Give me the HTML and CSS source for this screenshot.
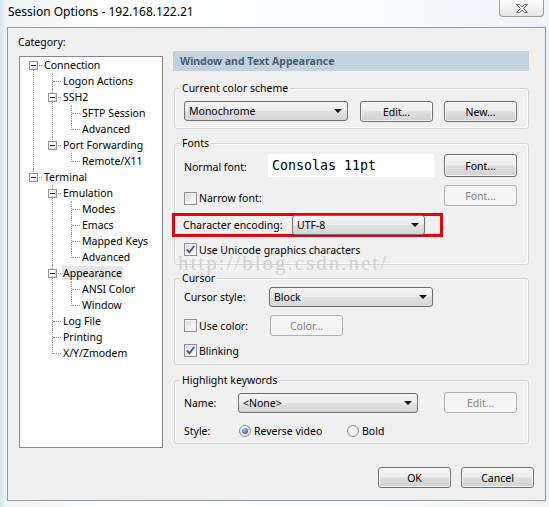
FILE: index.html
```html
<!DOCTYPE html>
<html>
<head>
<meta charset="utf-8">
<title>Session Options</title>
<link rel="stylesheet" href="styles.css">
</head>
<body>
<div class="frame">
  <div class="titlebar">
    <span class="title">Session Options - 192.168.122.21</span>
    <span class="close">
      <svg width="14" height="11" viewBox="0 0 14 11"><path d="M1.5 1.5h3l2.5 2.5 2.5-2.5h3l-4 4 4 4h-3l-2.5-2.5-2.5 2.5h-3l4-4z" fill="#fff" stroke="#6b6b6b" stroke-width="1" stroke-linejoin="round"/></svg>
    </span>
  </div>
  <div class="client">
    <div class="main">
      <div class="left">
        <div class="cat-label">Category:</div>
        <div class="treebox">
          <ul class="tree">
            <li><div class="row"><span class="box"></span><span class="lbl">Connection</span></div>
              <ul>
                <li><div class="row"><span class="lbl">Logon Actions</span></div></li>
                <li><div class="row"><span class="box"></span><span class="lbl">SSH2</span></div>
                  <ul>
                    <li><div class="row"><span class="lbl">SFTP Session</span></div></li>
                    <li><div class="row"><span class="lbl">Advanced</span></div></li>
                  </ul>
                </li>
                <li><div class="row"><span class="box"></span><span class="lbl">Port Forwarding</span></div>
                  <ul>
                    <li><div class="row"><span class="lbl">Remote/X11</span></div></li>
                  </ul>
                </li>
              </ul>
            </li>
            <li><div class="row"><span class="box"></span><span class="lbl">Terminal</span></div>
              <ul>
                <li><div class="row"><span class="box"></span><span class="lbl">Emulation</span></div>
                  <ul>
                    <li><div class="row"><span class="lbl">Modes</span></div></li>
                    <li><div class="row"><span class="lbl">Emacs</span></div></li>
                    <li><div class="row"><span class="lbl">Mapped Keys</span></div></li>
                    <li><div class="row"><span class="lbl">Advanced</span></div></li>
                  </ul>
                </li>
                <li><div class="row"><span class="box"></span><span class="lbl sel">Appearance</span></div>
                  <ul>
                    <li><div class="row"><span class="lbl">ANSI Color</span></div></li>
                    <li><div class="row"><span class="lbl">Window</span></div></li>
                  </ul>
                </li>
                <li><div class="row"><span class="lbl">Log File</span></div></li>
                <li><div class="row"><span class="lbl">Printing</span></div></li>
                <li><div class="row"><span class="lbl">X/Y/Zmodem</span></div></li>
              </ul>
            </li>
          </ul>
        </div>
      </div>

      <div class="right">
        <div class="header">Window and Text Appearance</div>

        <div class="group g-scheme">
          <div class="gtitle">Current color scheme</div>
          <div class="grow r-scheme">
            <div class="combo c-scheme"><span>Monochrome</span><i class="arrow"></i></div>
            <button type="button" class="btn b-edit">Edit...</button>
            <button type="button" class="btn b-new">New...</button>
          </div>
        </div>

        <div class="group g-fonts">
          <div class="gtitle">Fonts</div>
          <div class="grow r-normal">
            <span class="flabel">Normal font:</span>
            <span class="fontbox">Consolas 11pt</span>
            <button type="button" class="btn b-font">Font...</button>
          </div>
          <div class="grow r-narrow">
            <span class="check"><span class="cb"></span><span>Narrow font:</span></span>
            <button type="button" class="btn dis b-right" disabled>Font...</button>
          </div>
          <div class="grow r-enc">
            <div class="encbox">
              <span class="elabel">Character encoding:</span>
              <div class="combo c-enc"><span>UTF-8</span><i class="arrow"></i></div>
            </div>
          </div>
          <div class="grow r-uni">
            <span class="check"><span class="cb on"><svg width="11" height="11" viewBox="0 0 11 11"><path d="M2 5.5l2.5 2.8L9.2 2" fill="none" stroke="#3b5894" stroke-width="1.9"/></svg></span><span>Use Unicode graphics characters</span></span>
          </div>
        </div>

        <div class="group g-cursor">
          <div class="gtitle">Cursor</div>
          <div class="grow r-cstyle">
            <span class="clabel">Cursor style:</span>
            <div class="combo c-cursor"><span>Block</span><i class="arrow"></i></div>
          </div>
          <div class="grow r-ucolor">
            <span class="check w86"><span class="cb"></span><span>Use color:</span></span>
            <button type="button" class="btn dis" disabled>Color...</button>
          </div>
          <div class="grow r-blink">
            <span class="check"><span class="cb on"><svg width="11" height="11" viewBox="0 0 11 11"><path d="M2 5.5l2.5 2.8L9.2 2" fill="none" stroke="#3b5894" stroke-width="1.9"/></svg></span><span>Blinking</span></span>
          </div>
        </div>

        <div class="group g-hl">
          <div class="gtitle">Highlight keywords</div>
          <div class="grow r-name">
            <span class="hlabel">Name:</span>
            <div class="combo c-name"><span>&lt;None&gt;</span><i class="arrow"></i></div>
            <button type="button" class="btn dis b-right" disabled>Edit...</button>
          </div>
          <div class="grow r-style">
            <span class="hlabel">Style:</span>
            <span class="radio w108"><span class="rb on"></span><span>Reverse video</span></span>
            <span class="radio"><span class="rb"></span><span>Bold</span></span>
          </div>
        </div>

        <div class="watermark">http://blog.csdn.net/</div>
      </div>
    </div>

    <div class="actions">
      <button type="button" class="btn">OK</button>
      <button type="button" class="btn">Cancel</button>
    </div>
  </div>
</div>
</body>
</html>
```

FILE: styles.css
```css
* { box-sizing: border-box; }
html, body { margin: 0; padding: 0; }
button { margin: 0; }
body {
  width: 549px;
  height: 507px;
  overflow: hidden;
  font-family: "Noto Sans", "DejaVu Sans", sans-serif;
  font-size: 10.5px;
  color: #000;
}
.frame {
  width: 549px;
  height: 507px;
  background: linear-gradient(90deg, #d9e4ee 0px, #eef3f7 6px, #ffffff 120px, #f7f9fb 420px, #eef2f6 549px);
}
.titlebar {
  height: 27px;
  display: flex;
  align-items: flex-start;
}
.title {
  font-size: 12px;
  line-height: 14px;
  margin: 5px 0 0 8px;
}
.close {
  margin-left: auto;
  margin-right: 5px;
  width: 45px;
  height: 17px;
  border: 1px solid #9c9c9c;
  border-top: none;
  border-radius: 0 0 4px 4px;
  background: linear-gradient(#fbfbfb, #e8e8e8);
  display: flex;
  align-items: center;
  justify-content: center;
}
.client {
  margin-left: 7px;
  width: 539px;
  height: 474px;
  border: 1px solid #979797;
  background: #f0f0f0;
  padding: 7px 0 0 10px;
}
.main {
  display: flex;
  align-items: flex-start;
}
.left { width: 145px; flex: none; }
.cat-label { line-height: 14px; }
.treebox {
  margin: 7px 0 0 1px;
  width: 144px;
  height: 392px;
  border: 1px solid #828790;
  background: #fff;
}

/* tree */
.tree, .tree ul { list-style: none; margin: 0; padding: 0; }
.tree ul { padding-left: 19px; }
.tree li { position: relative; }
.tree li::before {
  content: "";
  position: absolute;
  left: 13px;
  top: 0;
  bottom: 0;
  border-left: 1px dotted #9a9a9a;
}
.tree > li:first-child::before { top: 8px; }
.tree li:last-child::before { bottom: auto; height: 9px; }
.row {
  position: relative;
  height: 16px;
  display: flex;
  align-items: center;
  padding-left: 23px;
}
.row::before {
  content: "";
  position: absolute;
  left: 14px;
  top: 8px;
  width: 8px;
  border-top: 1px dotted #9a9a9a;
}
.box {
  position: absolute;
  left: 9px;
  top: 4px;
  width: 9px;
  height: 9px;
  border: 1px solid #939393;
  background: linear-gradient(135deg, #ffffff 30%, #dcdcdc);
  display: flex;
  align-items: center;
  justify-content: center;
}
.box::after {
  content: "";
  width: 5px;
  height: 1px;
  background: #222;
}
.lbl {
  padding: 0 1px;
  line-height: 14px;
  white-space: nowrap;
}
.lbl.sel { background: #e6e6e6; }

/* right column */
.right {
  width: 356px;
  flex: none;
  margin: 16px 0 0 10px;
  position: relative;
}
.header {
  height: 20px;
  line-height: 20px;
  background: #c4d2df;
  color: #4a5c70;
  font-weight: bold;
  padding-left: 7px;
}
.group {
  margin-left: 1px;
  border: 1px solid #d5d5d5;
  border-radius: 3px;
  box-shadow: inset 0 0 0 1px #f9f9f9;
  padding: 0 11px 0 9px;
}
.gtitle {
  margin: -8px 0 0 -4px;
  padding: 0 2px;
  background: #f0f0f0;
  width: max-content;
  line-height: 14px;
}
.grow { display: flex; align-items: center; }
.grow > * { flex: none; }

.g-scheme { margin-top: 17px; padding-bottom: 6px; }
.r-scheme { margin-top: 6px; height: 21px; align-items: flex-start; }
.c-scheme { width: 164px; }
.grow .b-edit { margin-left: 12px; }
.grow .b-new { margin-left: 11px; }

.g-fonts { margin-top: 14px; padding-bottom: 8px; }
.r-normal { margin-top: 4px; height: 23px; }
.flabel { width: 84px; padding-top: 3px; }
.fontbox {
  width: 166px;
  height: 23px;
  background: #fff;
  font-family: "DejaVu Sans Mono", "Liberation Mono", monospace;
  font-size: 13.3px;
  line-height: 23px;
  padding-left: 4px;
}
.grow .b-font { margin-left: 10px; height: 23px; }
.r-narrow { margin-top: 8px; height: 21px; }
.r-narrow .check { padding-top: 5px; }
.grow .b-right { margin-left: auto; }
.r-enc { margin-top: 7px; }
.encbox {
  margin-left: -12px;
  width: 271px;
  height: 24px;
  border: 3px solid #e3000f;
  display: flex;
  align-items: center;
  padding-left: 8px;
}
.elabel { width: 109px; flex: none; }
.c-enc { width: 133px; height: 18px; border-radius: 0; border-color: #8a8a8a; }
.r-uni { margin-top: 6px; height: 13px; }

.g-cursor { margin-top: 13px; padding-bottom: 7px; }
.r-cstyle { margin-top: 2px; height: 20px; }
.clabel { width: 85px; }
.c-cursor { width: 164px; }
.r-ucolor { margin-top: 8px; height: 21px; }
.w86 { width: 86px; }
.r-blink { margin-top: 8px; height: 13px; }

.g-hl { margin-top: 15px; padding-bottom: 6px; }
.r-name { margin-top: 5px; height: 21px; }
.hlabel { width: 54px; }
.c-name { width: 180px; height: 19px; }
.r-style { margin-top: 11px; height: 13px; }
.w108 { width: 108px; }

/* controls */
.btn {
  width: 73px;
  height: 21px;
  flex: none;
  border: 1px solid #707070;
  border-radius: 3px;
  background: linear-gradient(#f5f5f5 0%, #ececec 48%, #dedede 52%, #d2d2d2 100%);
  box-shadow: inset 0 0 0 1px rgba(255, 255, 255, 0.75);
  font-family: inherit;
  font-size: 10.5px;
  color: #000;
  padding: 0;
  display: flex;
  align-items: center;
  justify-content: center;
}
.btn.dis {
  border-color: #adb2b5;
  background: #f4f4f4;
  color: #838383;
  box-shadow: none;
}
.combo {
  height: 20px;
  border: 1px solid #707070;
  border-radius: 3px;
  background: linear-gradient(#f5f5f5 0%, #ececec 48%, #e0e0e0 52%, #d6d6d6 100%);
  display: flex;
  align-items: center;
  justify-content: space-between;
  padding: 0 5px 0 4px;
  white-space: nowrap;
}
.arrow {
  width: 0;
  height: 0;
  border-left: 4px solid transparent;
  border-right: 4px solid transparent;
  border-top: 4px solid #111;
}
.check, .radio {
  display: flex;
  align-items: center;
  gap: 2px;
  white-space: nowrap;
}
.radio { gap: 3px; }
.cb {
  width: 13px;
  height: 13px;
  flex: none;
  border: 1px solid #8e8f8f;
  background: linear-gradient(135deg, #cfd2d6 0%, #f2f3f4 60%, #ffffff 100%);
  box-shadow: inset 0 0 0 1px #f6f6f6;
  display: flex;
  align-items: center;
  justify-content: center;
}
.rb {
  width: 12px;
  height: 12px;
  flex: none;
  margin-left: 1px;
  border-radius: 50%;
  border: 1px solid #8e8f8f;
  background: radial-gradient(circle at 40% 40%, #ffffff 20%, #d8d8d8 100%);
  display: flex;
  align-items: center;
  justify-content: center;
}
.rb.on::after {
  content: "";
  width: 6px;
  height: 6px;
  border-radius: 50%;
  background: radial-gradient(circle at 40% 35%, #a6d8f7 0%, #2a76c0 60%, #174f8f 100%);
}
.watermark {
  position: absolute;
  left: 5px;
  top: 202px;
  font-family: "Liberation Serif", "DejaVu Serif", serif;
  font-size: 21px;
  line-height: 21px;
  letter-spacing: 2px;
  color: #d2d2d2;
  white-space: nowrap;
  pointer-events: none;
}
.actions {
  display: flex;
  justify-content: flex-end;
  gap: 10px;
  padding-right: 11px;
  margin-top: 19px;
}
```
